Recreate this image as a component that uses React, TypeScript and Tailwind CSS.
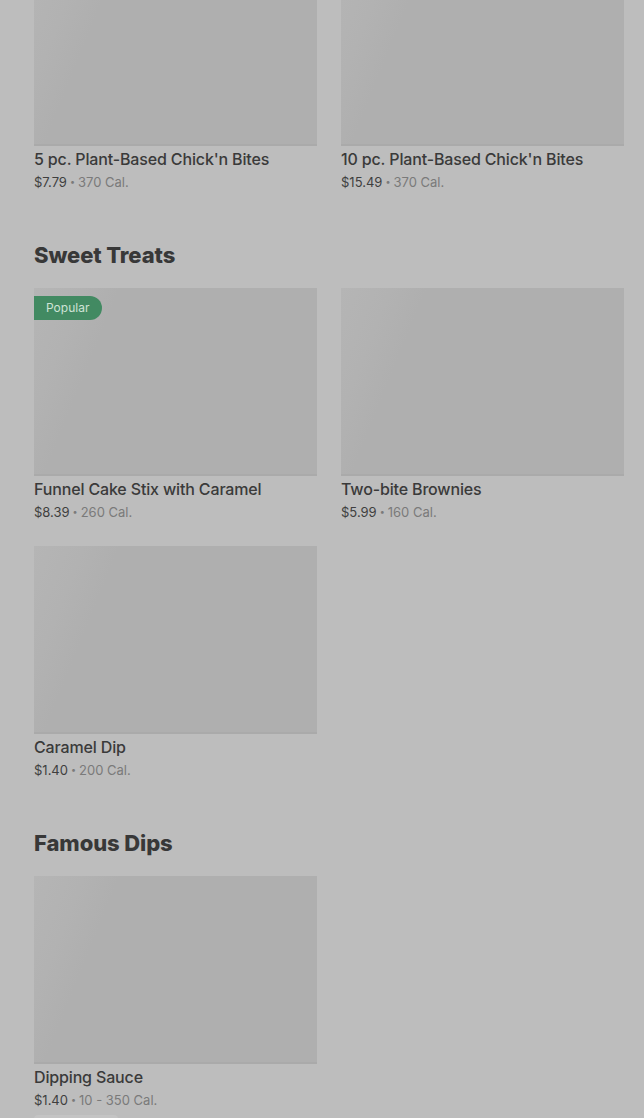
const sections = [
  {
    title: "",
    items: [
      { id: 1, name: "5 pc. Plant-Based Chick'n Bites", price: "$7.79", cal: "370 Cal." },
      { id: 2, name: "10 pc. Plant-Based Chick'n Bites", price: "$15.49", cal: "370 Cal." },
    ],
  },
  {
    title: "Sweet Treats",
    items: [
      { id: 3, name: "Funnel Cake Stix with Caramel", price: "$8.39", cal: "260 Cal.", popular: true },
      { id: 4, name: "Two-bite Brownies", price: "$5.99", cal: "160 Cal." },
      { id: 5, name: "Caramel Dip", price: "$1.40", cal: "200 Cal." },
    ],
  },
  {
    title: "Famous Dips",
    items: [{ id: 6, name: "Dipping Sauce", price: "$1.40", cal: "10 - 350 Cal.", extra: true }],
  },
];

type Item = {
  id: number;
  name: string;
  price: string;
  cal: string;
  popular?: boolean;
  extra?: boolean;
};

function MenuCard({ item }: { item: Item }) {
  return (
    <div className="flex flex-col">
      <div className="relative h-[188px] border-b-2 border-[#aaaaaa] bg-[linear-gradient(112deg,#b5b5b5_0%,#b2b2b2_14%,#afafaf_24%,#afafaf_100%)]">
        {item.popular && (
          <span className="absolute left-0 top-2 flex h-6 w-[68px] items-center rounded-r-full bg-[#428a62] pl-3 text-[12px] text-[#cfe3d6]">
            Popular
          </span>
        )}
      </div>
      <div className="pt-[1px] text-[16px] leading-6 font-medium tracking-[-0.15px] text-[#3a3a3a]">{item.name}</div>
      <div className="flex items-center pt-[1px] text-[13px] leading-5 text-[#7a7a7a]">
        <span className="text-[#3f3f3f]">{item.price}</span>
        <span className="mx-[3px] text-[9px]">•</span>
        {item.cal}
      </div>
      {item.extra && <div className="mt-[5px] h-5 w-[84px] rounded bg-[#c4c4c4]" />}
    </div>
  );
}

export default function App() {
  return (
    <div
      className="h-[1118px] overflow-hidden bg-[#bdbdbd]"
      style={{ fontFamily: "Inter, 'Noto Sans', sans-serif" }}
    >
      <div className="-mt-[42px] flex flex-col gap-[49px] pl-[34px] pr-[20px]">
        {sections.map((section, i) => (
          <section key={i} className="flex flex-col">
            {section.title && (
              <h2 className="mb-[19px] text-[22px] leading-7 font-extrabold tracking-[-0.1px] text-[#383838]">
                {section.title}
              </h2>
            )}
            <div className="grid grid-cols-2 gap-x-6 gap-y-6">
              {section.items.map((item) => (
                <MenuCard key={item.id} item={item} />
              ))}
            </div>
          </section>
        ))}
      </div>
    </div>
  );
}
